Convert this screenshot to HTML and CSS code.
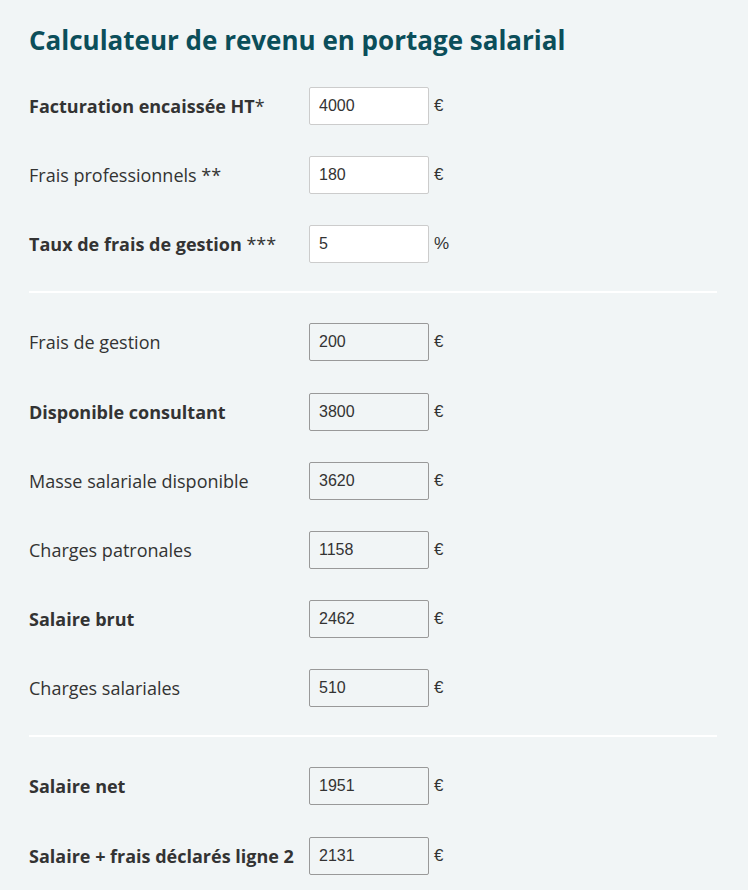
FILE: index.html
```html
<!DOCTYPE html>
<html lang="fr">
<head>
<meta charset="utf-8">
<title>Calculateur de revenu en portage salarial</title>
<link rel="stylesheet" href="styles.css">
</head>
<body>
<div class="calc">
  <h1 class="title">Calculateur de revenu en portage salarial</h1>
  <div class="group">
    <div class="row"><label class="lbl bold">Facturation encaissée HT<span class="note">*</span></label><input class="field" type="text" value="4000"><span class="unit">€</span></div>
    <div class="row"><label class="lbl">Frais professionnels **</label><input class="field" type="text" value="180"><span class="unit">€</span></div>
    <div class="row"><label class="lbl bold">Taux de frais de gestion <span class="note">***</span></label><input class="field" type="text" value="5"><span class="unit">%</span></div>
  </div>
  <div class="divider"></div>
  <div class="group">
    <div class="row"><label class="lbl">Frais de gestion</label><input class="field ro" type="text" value="200" readonly><span class="unit">€</span></div>
    <div class="row"><label class="lbl bold">Disponible consultant</label><input class="field ro" type="text" value="3800" readonly><span class="unit">€</span></div>
    <div class="row"><label class="lbl">Masse salariale disponible</label><input class="field ro" type="text" value="3620" readonly><span class="unit">€</span></div>
    <div class="row"><label class="lbl">Charges patronales</label><input class="field ro" type="text" value="1158" readonly><span class="unit">€</span></div>
    <div class="row"><label class="lbl bold">Salaire brut</label><input class="field ro" type="text" value="2462" readonly><span class="unit">€</span></div>
    <div class="row"><label class="lbl">Charges salariales</label><input class="field ro" type="text" value="510" readonly><span class="unit">€</span></div>
  </div>
  <div class="divider"></div>
  <div class="group">
    <div class="row"><label class="lbl bold">Salaire net</label><input class="field ro" type="text" value="1951" readonly><span class="unit">€</span></div>
    <div class="row"><label class="lbl bold">Salaire + frais déclarés ligne 2</label><input class="field ro" type="text" value="2131" readonly><span class="unit">€</span></div>
  </div>
</div>
</body>
</html>
```

FILE: styles.css
```css
html, body {
  margin: 0;
  padding: 0;
  background: #f1f5f6;
}
.calc {
  padding: 22px 31px 0 29px;
  font-family: "Open Sans", "Liberation Sans", sans-serif;
  color: #333333;
}
.title {
  margin: 0 0 29px 0;
  font-size: 26px;
  line-height: 36px;
  font-weight: 700;
  color: #0b4e5a;
}
.group {
  display: flex;
  flex-direction: column;
  gap: 31.2px;
}
.row {
  display: flex;
  align-items: center;
  height: 38px;
}
.lbl {
  width: 280px;
  flex: none;
  font-size: 18px;
  line-height: 24px;
}
.bold {
  font-weight: 700;
}
.note {
  font-weight: 400;
}
.field {
  box-sizing: border-box;
  width: 120px;
  height: 38px;
  margin: 0;
  padding: 0 9px;
  border: 1px solid #cccccc;
  border-radius: 2px;
  background: #ffffff;
  font-family: "Liberation Sans", Arial, sans-serif;
  font-size: 16px;
  color: #333333;
  outline: none;
}
.field.ro {
  background: #f1f5f6;
  border-color: #999999;
}
.unit {
  margin-left: 5px;
  font-family: "Liberation Sans", Arial, sans-serif;
  font-size: 17px;
  color: #333333;
}
.divider {
  height: 2px;
  background: #ffffff;
  margin: 28px 0 30px 0;
}
```
